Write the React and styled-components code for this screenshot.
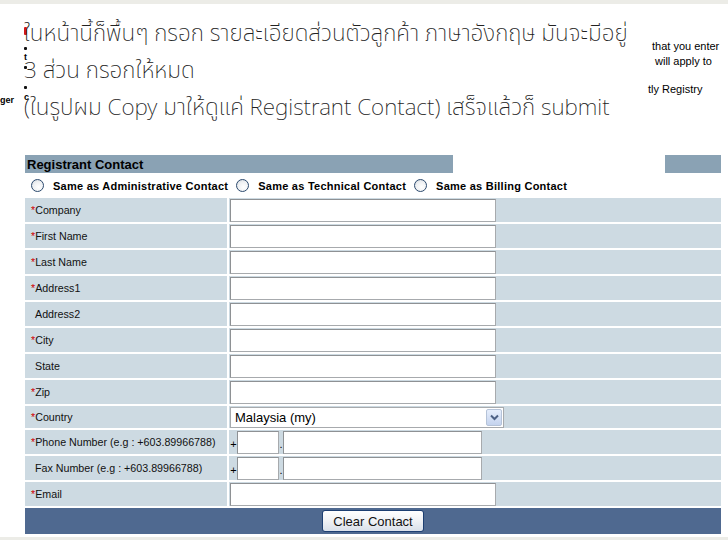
import React from "react";
import styled, { createGlobalStyle } from "styled-components";

const GlobalStyle = createGlobalStyle`
  html, body { margin: 0; padding: 0; background: #ffffff; }
  body { font-family: "Liberation Sans", Arial, sans-serif; }
`;

const Page = styled.div`
  width: 728px;
  height: 540px;
  overflow: hidden;
  display: flex;
  flex-direction: column;
  background: #fff;
`;

const Strip = styled.div`
  height: ${(p) => p.$h}px;
  background: #ecece7;
  flex: none;
`;

const Note = styled.div`
  position: relative;
  height: 151px;
  flex: none;
  display: flex;
`;

const LeftEdge = styled.div`
  width: 22px;
  padding-top: 91px;
  font: bold 9px "Liberation Sans", Arial, sans-serif;
  color: #000;
`;

const Marks = styled.div`
  width: 8px;
  margin-left: 2px;
  display: flex;
  flex-direction: column;
  align-items: flex-start;
  padding-top: 23px;
`;

const Mark = styled.span`
  display: block;
  width: ${(p) => p.$w || 3}px;
  height: ${(p) => p.$h || 3}px;
  margin-top: ${(p) => p.$mt || 0}px;
  background: ${(p) => p.$c || "#111"};
  border-radius: 1px;
`;

const MarkText = styled.span`
  display: block;
  margin-top: ${(p) => p.$mt || 0}px;
  font: bold 9px "Liberation Sans", Arial, sans-serif;
  line-height: 9px;
  color: #000;
`;

const RightSide = styled.div`
  margin-left: auto;
  width: 80px;
  padding-top: 35px;
  display: flex;
  flex-direction: column;
  font: 11px "Liberation Sans", Arial, sans-serif;
  color: #000;
`;

const SideLine = styled.span`
  display: block;
  line-height: 15px;
  white-space: nowrap;
  padding-left: ${(p) => p.$indent || 0}px;
  margin-top: ${(p) => p.$mt || 0}px;
`;

/* Hand-written annotation drawn over the screenshot */
const Handwriting = styled.div`
  position: absolute;
  left: 24px;
  top: 12px;
  font-family: "Noto Sans Thai", "Noto Sans Thai Looped", Loma, Garuda, "Noto Sans", "DejaVu Sans", sans-serif;
  font-weight: 200;
  font-size: 22.5px;
  line-height: 37px;
  color: #222;
  white-space: nowrap;
`;

const HandLine = styled.div`
  display: block;
`;

const Form = styled.div`
  margin: 0 7px 0 25px;
  display: flex;
  flex-direction: column;
  flex: none;
`;

const HeaderRow = styled.div`
  display: flex;
  justify-content: space-between;
  height: 18px;
`;

const HeaderTitle = styled.div`
  width: 428px;
  background: #8aa2b4;
  font: bold 13px "Liberation Sans", Arial, sans-serif;
  line-height: 19px;
  padding-left: 2px;
  box-sizing: border-box;
  color: #000;
`;

const HeaderEnd = styled.div`
  width: 56px;
  background: #8aa2b4;
`;

const RadioRow = styled.div`
  display: flex;
  align-items: center;
  height: 25px;
  padding-left: 6px;
  gap: 8px;
`;

const RadioItem = styled.label`
  display: flex;
  align-items: center;
  gap: 9px;
  font: bold 11px "Liberation Sans", Arial, sans-serif;
  color: #000;
  letter-spacing: 0.25px;
`;

const RadioCircle = styled.span`
  width: 11px;
  height: 11px;
  border-radius: 50%;
  border: 1px solid #2c4a6e;
  background: radial-gradient(circle at 60% 65%, #ffffff 0%, #eef0f2 55%, #c9cfd6 100%);
  box-sizing: content-box;
`;

const Rows = styled.div`
  display: flex;
  flex-direction: column;
  gap: 2px;
`;

const Row = styled.div`
  display: grid;
  grid-template-columns: 202px 1fr;
  column-gap: 2px;
  height: ${(p) => p.$h || 24}px;
`;

const LabelCell = styled.div`
  background: #cddae2;
  display: flex;
  align-items: center;
  padding-left: ${(p) => (p.$req ? 6 : 10)}px;
  font: 10.7px "Liberation Sans", Arial, sans-serif;
  color: #111;
  white-space: nowrap;
`;

const Req = styled.span`
  color: #d00000;
`;

const FieldCell = styled.div`
  background: #cddae2;
  display: flex;
  align-items: center;
  padding-left: 1px;
`;

const TextBox = styled.div`
  width: ${(p) => p.$w}px;
  height: ${(p) => p.$h || 22}px;
  box-sizing: border-box;
  background: #fff;
  border: 1px solid #a7aaad;
  border-top-color: #8e9194;
  border-left-color: #8e9194;
`;

const PhoneSign = styled.span`
  font: 11px "Liberation Sans", Arial, sans-serif;
  color: #000;
  width: ${(p) => p.$w}px;
  padding-top: 4px;
  text-align: center;
`;

const SelectBox = styled.div`
  width: 274px;
  height: 21px;
  box-sizing: border-box;
  background: #fff;
  border: 1px solid #a7aaad;
  display: flex;
  align-items: center;
  justify-content: space-between;
  padding: 0 1px 0 4px;
  font: 13px "Liberation Sans", Arial, sans-serif;
  color: #000;
`;

const DropButton = styled.span`
  width: 16px;
  height: 17px;
  box-sizing: border-box;
  border: 1px solid #b5c3d8;
  border-radius: 2px;
  background: linear-gradient(#e6eefc, #c4d3ee);
  display: flex;
  align-items: center;
  justify-content: center;
`;

const BottomBar = styled.div`
  margin-top: 2px;
  height: 26px;
  background: #4f6990;
  display: flex;
  align-items: center;
  justify-content: center;
`;

const ClearButton = styled.button`
  width: 102px;
  height: 22px;
  border: 1px solid #1d3f72;
  border-radius: 3px;
  background: linear-gradient(#ffffff 0%, #f1f3f6 45%, #d9e0ea 100%);
  font: 13px "Liberation Sans", Arial, sans-serif;
  color: #111;
  padding: 0;
  cursor: pointer;
`;

const Filler = styled.div`
  flex: 1;
`;

const fields = [
  { label: "Company", req: true },
  { label: "First Name", req: true },
  { label: "Last Name", req: true },
  { label: "Address1", req: true },
  { label: "Address2", req: false },
  { label: "City", req: true },
  { label: "State", req: false },
  { label: "Zip", req: true },
];

function Label({ text, req }) {
  return (
    <LabelCell $req={req}>
      {req && <Req>*</Req>}
      {text}
    </LabelCell>
  );
}

function Chevron() {
  return (
    <svg width="9" height="7" viewBox="0 0 9 7">
      <path d="M1 1.5 L4.5 5 L8 1.5" fill="none" stroke="#4d6185" strokeWidth="2" />
    </svg>
  );
}

function PhoneRow({ label, req }) {
  return (
    <Row>
      <Label text={label} req={req} />
      <FieldCell>
        <PhoneSign $w={7}>+</PhoneSign>
        <TextBox $w={42} $h={23} />
        <PhoneSign $w={4}>.</PhoneSign>
        <TextBox $w={199} $h={23} />
      </FieldCell>
    </Row>
  );
}

export default function App() {
  return (
    <>
      <GlobalStyle />
      <Page>
        <Strip $h={4} />
        <Note>
          <LeftEdge>ger</LeftEdge>
          <Marks>
            <Mark $c="#d01818" $h={8} />
            <Mark $mt={12} />
            <MarkText $mt={3}>t</MarkText>
            <Mark $mt={4} />
            <Mark $mt={17} />
            <MarkText $mt={4}>c</MarkText>
          </Marks>
          <RightSide>
            <SideLine $indent={4}>that you enter</SideLine>
            <SideLine $indent={7}>will apply to</SideLine>
            <SideLine $mt={13}>tly Registry</SideLine>
          </RightSide>
          <Handwriting>
            <HandLine>ในหน้านี้ก็พื้นๆ กรอก รายละเอียดส่วนตัวลูกค้า ภาษาอังกฤษ มันจะมีอยู่</HandLine>
            <HandLine>3 ส่วน กรอกให้หมด</HandLine>
            <HandLine>(ในรูปผม Copy มาให้ดูแค่ Registrant Contact) เสร็จแล้วก็ submit</HandLine>
          </Handwriting>
        </Note>
        <Form>
          <HeaderRow>
            <HeaderTitle>Registrant Contact</HeaderTitle>
            <HeaderEnd />
          </HeaderRow>
          <RadioRow>
            <RadioItem><RadioCircle />Same as Administrative Contact</RadioItem>
            <RadioItem><RadioCircle />Same as Technical Contact</RadioItem>
            <RadioItem><RadioCircle />Same as Billing Contact</RadioItem>
          </RadioRow>
          <Rows>
            {fields.map((f) => (
              <Row key={f.label}>
                <Label text={f.label} req={f.req} />
                <FieldCell>
                  <TextBox $w={266} $h={23} />
                </FieldCell>
              </Row>
            ))}
            <Row $h={22}>
              <Label text="Country" req />
              <FieldCell>
                <SelectBox>
                  Malaysia (my)
                  <DropButton><Chevron /></DropButton>
                </SelectBox>
              </FieldCell>
            </Row>
            <PhoneRow label="Phone Number (e.g : +603.89966788)" req />
            <PhoneRow label="Fax Number (e.g : +603.89966788)" req={false} />
            <Row>
              <Label text="Email" req />
              <FieldCell>
                <TextBox $w={266} $h={23} />
              </FieldCell>
            </Row>
          </Rows>
          <BottomBar>
            <ClearButton type="button">Clear Contact</ClearButton>
          </BottomBar>
        </Form>
        <Filler />
        <Strip $h={3} />
      </Page>
    </>
  );
}
